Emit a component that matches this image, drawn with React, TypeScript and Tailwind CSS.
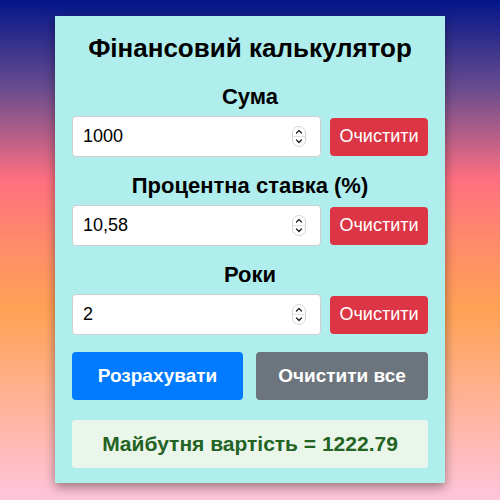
import React from "react";

function Spinner() {
  return (
    <svg width="14" height="21" viewBox="0 0 14 21" className="shrink-0">
      <rect x="0.5" y="0.5" width="13" height="20" rx="6.5" fill="#fff" stroke="#d4d4d4" />
      <line x1="1" y1="10.5" x2="13" y2="10.5" stroke="#e2e2e2" />
      <path d="M4.5 7 L7 4.5 L9.5 7" fill="none" stroke="#222" strokeWidth="1.3" strokeLinecap="round" strokeLinejoin="round" />
      <path d="M4.5 14 L7 16.5 L9.5 14" fill="none" stroke="#222" strokeWidth="1.3" strokeLinecap="round" strokeLinejoin="round" />
    </svg>
  );
}

function Field({ label, value }: { label: string; value: string }) {
  return (
    <div className="flex flex-col">
      <div className="text-center text-[22px] font-bold leading-[25px] text-black mb-[7px]">{label}</div>
      <div className="flex items-center gap-[9px]">
        <div className="flex items-center h-[41px] w-[249px] bg-white border border-[#cfcfcf] rounded-[4px] pl-[10px] pr-[14px]">
          <input
            readOnly
            value={value}
            className="flex-1 min-w-0 bg-transparent outline-none text-[18px] text-black"
          />
          <Spinner />
        </div>
        <button className="h-[38px] flex-1 bg-[#dc3545] text-white text-[18px] rounded-[4px]">Очистити</button>
      </div>
    </div>
  );
}

export default function App() {
  return (
    <div
      className="w-[500px] h-[500px] flex justify-center pt-[16px] bg-[linear-gradient(to_bottom,#03168a_0%,#6b4d8f_18%,#ff7080_36%,#ff8a6c_48%,#ffa255_62%,#ffb295_80%,#ffc4dc_100%)]"
      style={{ fontFamily: '"Liberation Sans", Arial, sans-serif' }}
    >
      <div className="w-[390px] h-[467px] bg-[#b0eeee] shadow-[0_4px_10px_rgba(0,0,0,0.4)] px-[17px] pt-[17px] flex flex-col">
        <h1 className="text-center text-[26px] font-bold leading-[30px] text-black mb-[21px]">Фінансовий калькулятор</h1>
        <div className="flex flex-col gap-[16px]">
          <Field label="Сума" value="1000" />
          <Field label="Процентна ставка (%)" value="10,58" />
          <Field label="Роки" value="2" />
        </div>
        <div className="flex gap-[13px] mt-[17px]">
          <button className="h-[48px] w-[171px] bg-[#007bff] text-white text-[19px] font-bold rounded-[4px]">Розрахувати</button>
          <button className="h-[48px] flex-1 bg-[#6c757d] text-white text-[19px] font-bold rounded-[4px]">Очистити все</button>
        </div>
        <div className="mt-[20px] h-[48px] bg-[#eaf6ea] rounded-[4px] flex items-center justify-center text-[21px] font-bold text-[#236323]">
          Майбутня вартість = 1222.79
        </div>
      </div>
    </div>
  );
}
